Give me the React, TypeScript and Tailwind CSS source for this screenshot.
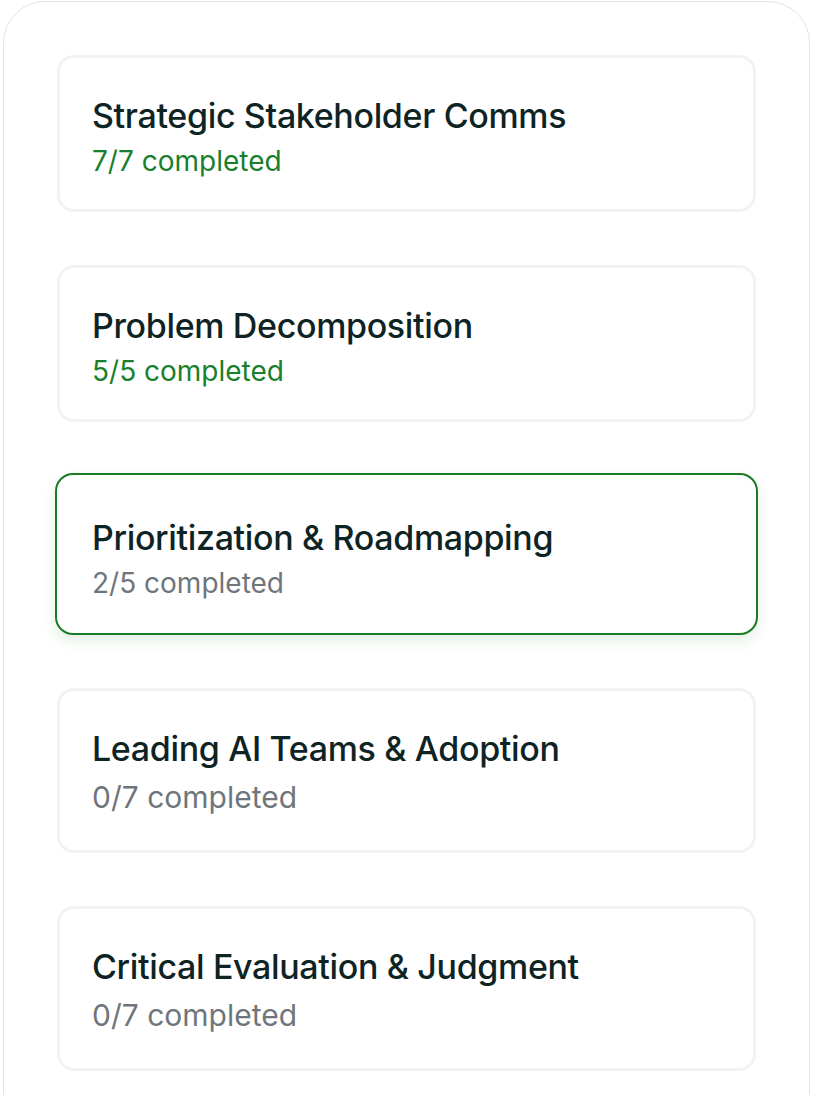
import React from 'react';

type Module = {
    title: string;
    done: number;
    total: number;
};

const modules: Module[] = [
    { title: 'Strategic Stakeholder Comms', done: 7, total: 7 },
    { title: 'Problem Decomposition', done: 5, total: 5 },
    { title: 'Prioritization & Roadmapping', done: 2, total: 5 },
    { title: 'Leading AI Teams & Adoption', done: 0, total: 7 },
    { title: 'Critical Evaluation & Judgment', done: 0, total: 7 },
];

const ACTIVE = 2;

const ModuleCard: React.FC<{ item: Module; active: boolean; tall: boolean }> = ({ item, active, tall }) => {
    const complete = item.done === item.total;

    let box = 'h-[157px] flex flex-col pt-[35px] px-[32px] bg-white rounded-[17px] border-[3px] border-[#f2f2f2]';
    if (tall) {
        box = 'h-[165px] flex flex-col pt-[35px] px-[32px] bg-white rounded-[17px] border-[3px] border-[#f2f2f2]';
    }
    if (active) {
        box = 'h-[162px] -mt-[2px] -mx-[2px] flex flex-col pt-[40px] px-[35px] bg-white rounded-[18px] border-2 border-[#1b7a24] shadow-[0_6px_14px_rgba(60,140,60,0.14)]';
    }

    return (
        <div className={box}>
            <h3 className="text-[34px] leading-[46px] font-[470] text-[#0e2424] tracking-[-0.35px] whitespace-nowrap">
                {item.title}
            </h3>
            {tall ? (
                <p className="text-[30px] leading-[40px] text-[#6f767b] mt-[5px]">
                    {item.done}/{item.total} completed
                </p>
            ) : (
                <p className={complete ? 'text-[28px] leading-[38px] text-[#1a7f2c] mt-[3px]' : 'text-[28px] leading-[38px] text-[#6f767b] mt-[3px]'}>
                    {item.done}/{item.total} completed
                </p>
            )}
        </div>
    );
};

export default function App() {
    return (
        <div
            className="w-[813px] h-[1095px] bg-white overflow-hidden"
            style={{ fontFamily: 'Inter, "Noto Sans", sans-serif' }}
        >
            <div className="mx-[3px] mt-[1px] h-[1200px] rounded-t-[42px] border border-[#e2e2e2] px-[53px] pt-[53px]">
                <div className="flex flex-col gap-[53px]">
                    {modules.map((m, i) => (
                        <ModuleCard key={m.title} item={m} active={i === ACTIVE} tall={i > ACTIVE} />
                    ))}
                </div>
            </div>
        </div>
    );
}
